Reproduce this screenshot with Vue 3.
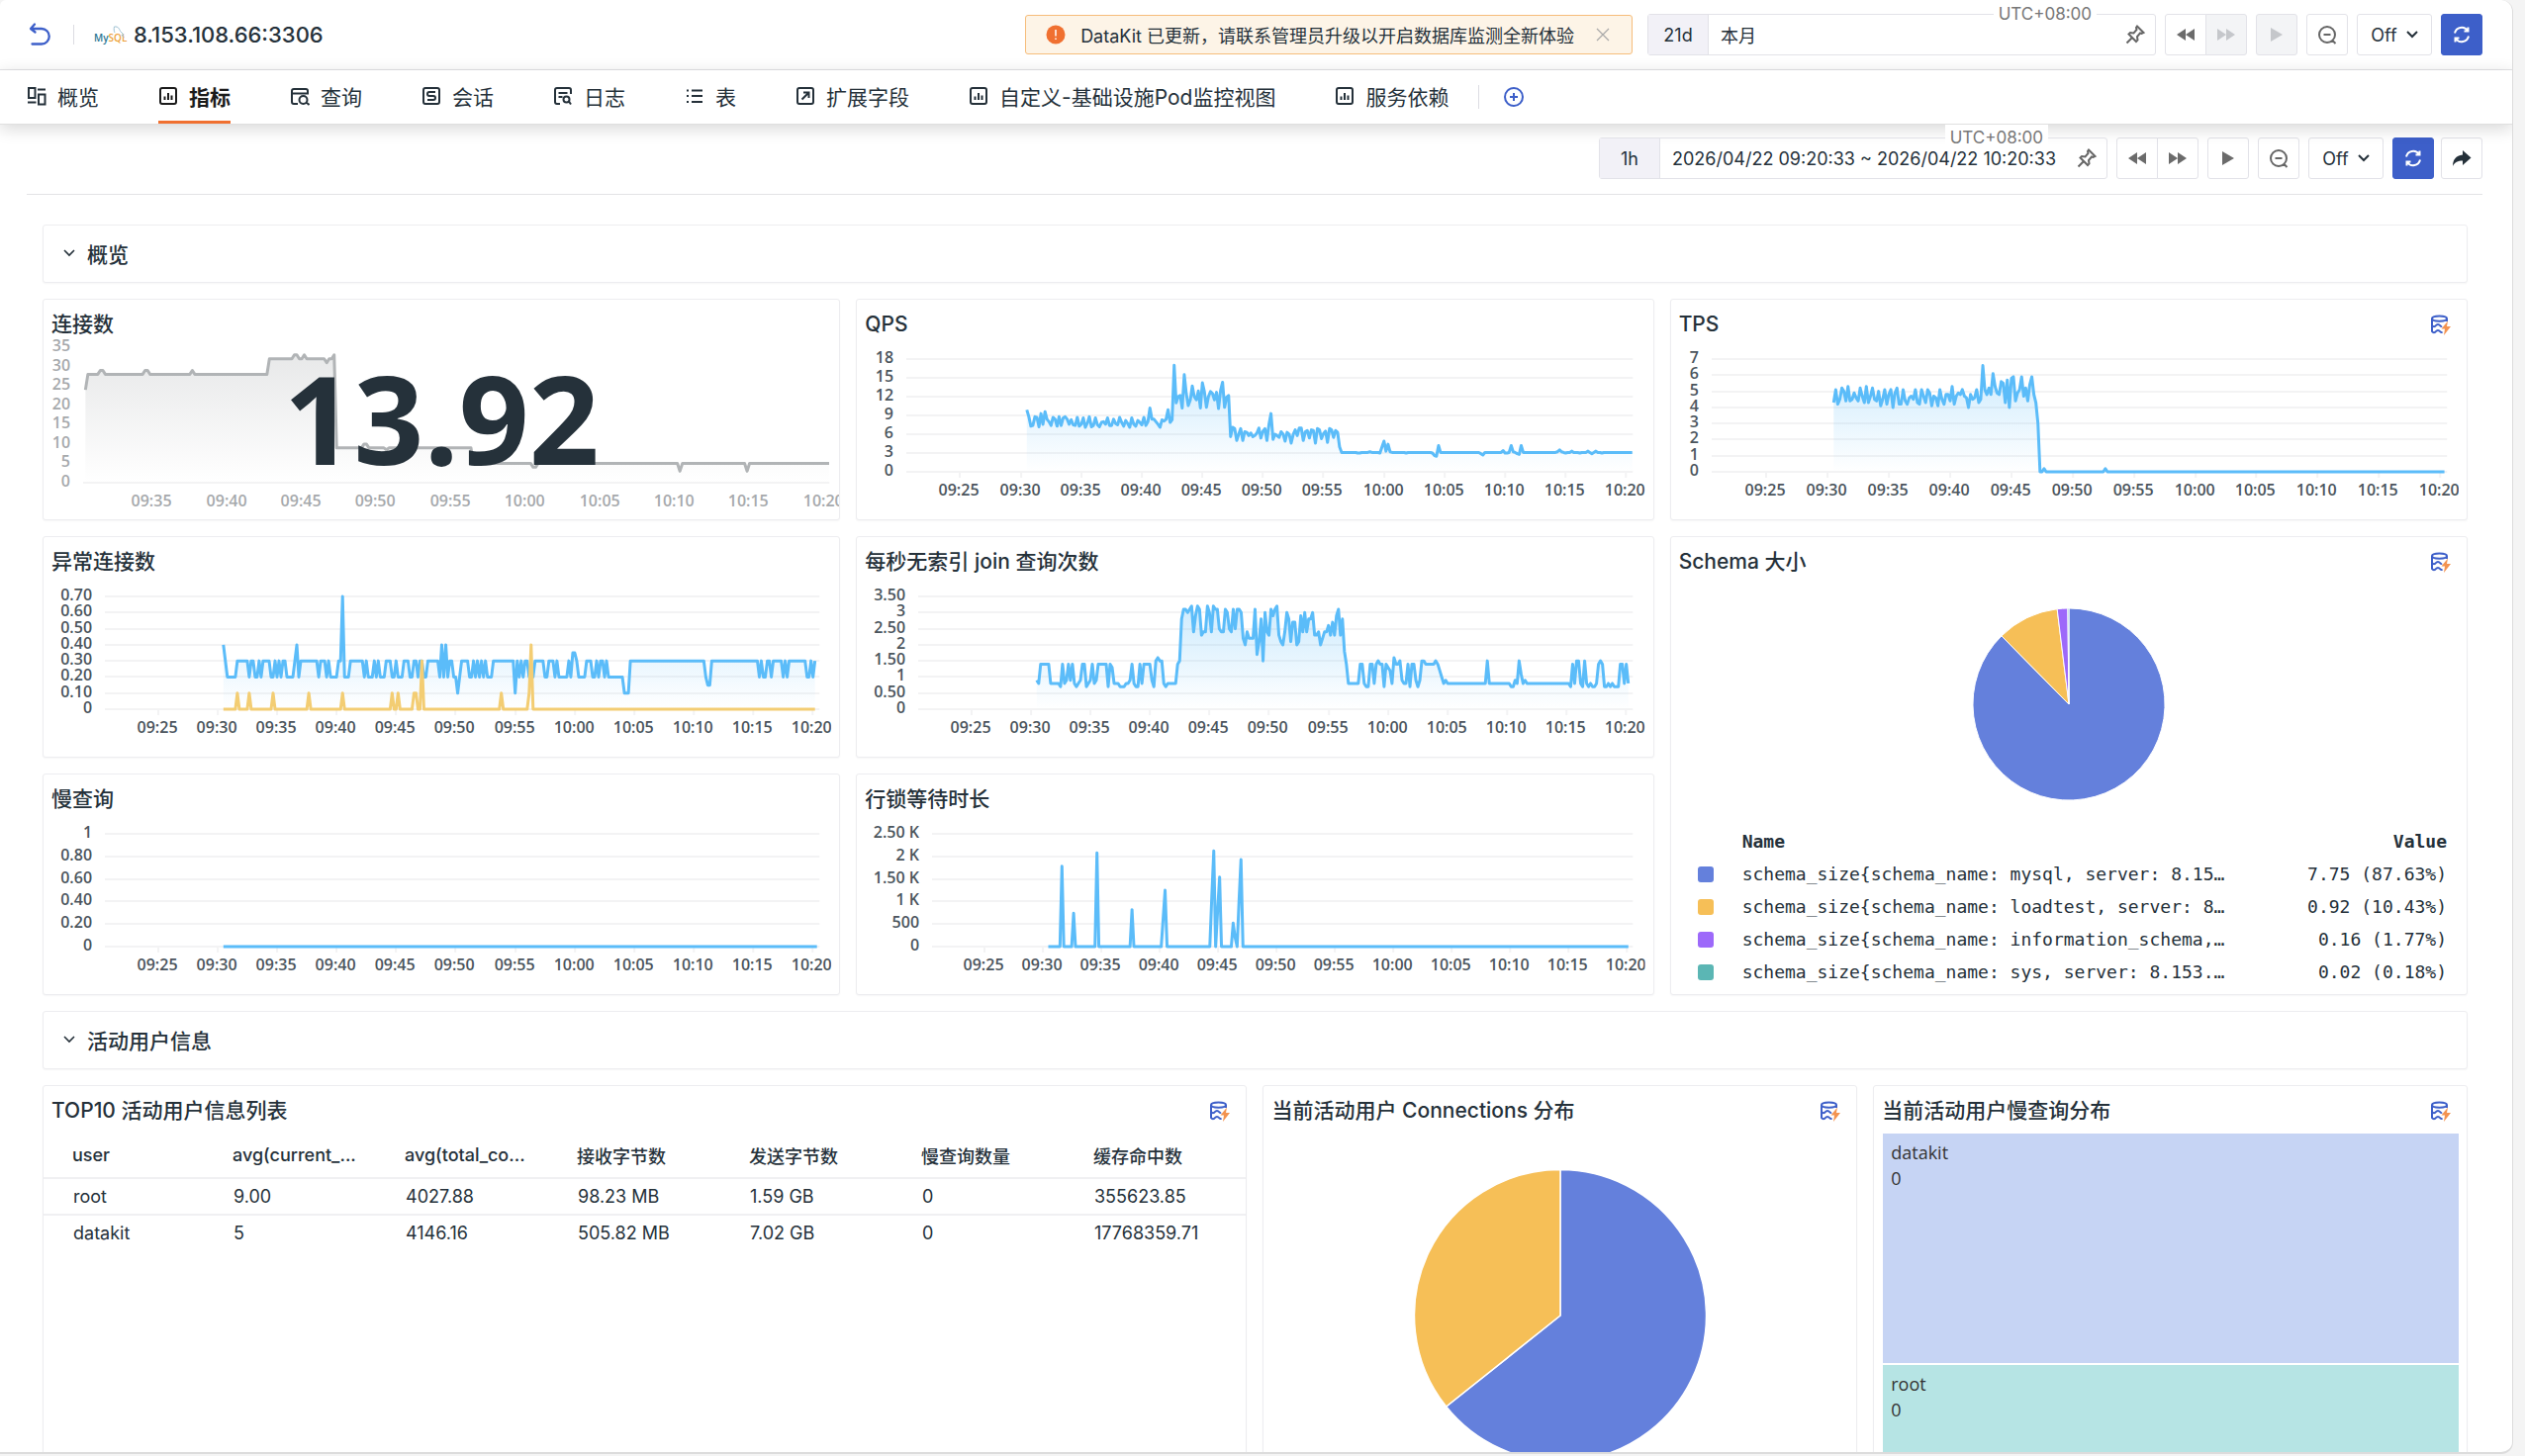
<template>
  <div class="panel">
    <header class="topbar">
      <div class="title-group">
        <button class="icon-btn back" aria-label="返回">
          <svg width="24" height="26" viewBox="0 0 24 26" fill="none" stroke="#3d5fc9" stroke-width="2.300" stroke-linecap="round" stroke-linejoin="round">
            <path d="M7 2.500 3 7l4.500 3.500M3.500 7H14a7.700 7.700 0 0 1 0 15.500H4.500" />
          </svg>
        </button>
        <span class="divider"></span>
        <svg class="mysql" width="34" height="22" viewBox="0 0 34 22" role="img" aria-label="MySQL">
          <text x="0" y="18" font-size="10"><tspan fill="#2c7694">My</tspan><tspan fill="#eda23c">SQL</tspan></text>
          <path d="M21 9c-1-2-1-4-.5-6 4-.5 5 2 6 4.500l3.500 3.500-2 .5 2.500 2.500" fill="none" stroke="#9cc0d2" />
        </svg>
        <h1>8.153.108.66:3306</h1>
      </div>
      <div class="alert">
        <svg width="20" height="20" viewBox="0 0 20 20">
          <circle cx="10" cy="10" r="9.500" fill="#f07030" />
          <path d="M10 5v6.500M10 13.500v1.500" stroke="#fff" stroke-width="1.500" />
        </svg>
        <span class="alert-text">DataKit 已更新，请联系管理员升级以开启数据库监测全新体验</span>
        <button class="icon-btn" aria-label="关闭">
          <svg width="14" height="14" viewBox="0 0 14 14" stroke="#a9a9a9" stroke-width="1.200"><path d="m1 1 12 12M13 1 1 13" /></svg>
        </button>
      </div>
      <div v-for="bar in bars.slice(0, 1)" :key="bar.range" class="time-controls">
        <div class="picker wide">
          <span class="utc">UTC+08:00</span>
          <span class="span-tag">{{ bar.span }}</span>
          <input class="range" :value="bar.range" aria-label="时间范围" readonly />
          <button class="icon-btn pin" aria-label="固定"><svg width="22" height="22" viewBox="0 0 22 22"><path :d="icons.pin" /></svg></button>
        </div>
        <div class="btn-group">
          <button class="tool" aria-label="后退"><svg width="20" height="14" viewBox="0 0 20 14"><path :d="icons.rewind" /></svg></button>
          <button class="tool" aria-label="前进" disabled><svg width="20" height="14" viewBox="0 0 20 14"><path :d="icons.forward" /></svg></button>
        </div>
        <button class="tool" aria-label="播放" disabled><svg width="14" height="16" viewBox="0 0 14 16"><path :d="icons.play" /></svg></button>
        <button class="tool stroke" aria-label="缩小"><svg width="20" height="20" viewBox="0 0 20 20"><path :d="icons.zoom" /></svg></button>
        <button class="tool off">Off<svg width="12" height="8" viewBox="0 0 12 8"><path d="m1 1 5 5 5-5" /></svg></button>
        <button class="tool refresh" aria-label="刷新"><svg width="20" height="20" viewBox="0 0 20 20"><path :d="icons.refresh" /></svg></button>
      </div>
    </header>

    <nav class="tabs">
      <a v-for="(tab, i) in tabs" :key="tab.label" href="#" :class="['tab', { active: i === 1 }]">
        <svg width="20" height="20" viewBox="0 0 20 20"><path :d="icons[tab.icon]" /></svg>
        <span>{{ tab.label }}</span>
      </a>
      <span class="divider tab-divider"></span>
      <button class="icon-btn" aria-label="新增">
        <svg width="22" height="22" viewBox="0 0 22 22" fill="none" stroke="#3d5fc9" stroke-width="2"><circle cx="11" cy="11" r="9" /><path d="M11 7v8M7 11h8" /></svg>
      </button>
    </nav>

    <main>
      <div class="subbar">
        <div v-for="bar in bars.slice(1)" :key="bar.range" class="time-controls">
          <div class="picker">
            <span class="utc">UTC+08:00</span>
            <span class="span-tag">{{ bar.span }}</span>
            <input class="range" :value="bar.range" aria-label="时间范围" readonly />
            <button class="icon-btn pin" aria-label="固定"><svg width="22" height="22" viewBox="0 0 22 22"><path :d="icons.pin" /></svg></button>
          </div>
          <div class="btn-group">
            <button class="tool" aria-label="后退"><svg width="20" height="14" viewBox="0 0 20 14"><path :d="icons.rewind" /></svg></button>
            <button class="tool" aria-label="前进"><svg width="20" height="14" viewBox="0 0 20 14"><path :d="icons.forward" /></svg></button>
          </div>
          <button class="tool" aria-label="播放"><svg width="14" height="16" viewBox="0 0 14 16"><path :d="icons.play" /></svg></button>
          <button class="tool stroke" aria-label="缩小"><svg width="20" height="20" viewBox="0 0 20 20"><path :d="icons.zoom" /></svg></button>
          <button class="tool off">Off<svg width="12" height="8" viewBox="0 0 12 8"><path d="m1 1 5 5 5-5" /></svg></button>
          <button class="tool refresh" aria-label="刷新"><svg width="20" height="20" viewBox="0 0 20 20"><path :d="icons.refresh" /></svg></button>
        </div>
        <button class="tool share" aria-label="分享"><svg width="20" height="18" viewBox="0 0 20 18"><path :d="icons.share" /></svg></button>
      </div>

      <div class="board">
        <button class="section">
          <svg width="12" height="8" viewBox="0 0 12 8"><path d="m1 1 5 5 5-5" /></svg>概览
        </button>

        <section v-for="chart in charts" :key="chart.title" class="card" :class="{ 'with-number': chart.number }">
          <div class="card-head">
            <h2>{{ chart.title }}</h2>
            <svg v-if="chart.badge" class="badge" width="22" height="22" viewBox="0 0 22 22">
              <path :d="icons.cylinder" /><path class="bolt" :d="icons.bolt" />
            </svg>
          </div>
          <svg class="plot" viewBox="0 0 804 184">
            <defs>
              <linearGradient :id="'fade-' + chart.id" x1="0" y1="0" x2="0" y2="1">
                <stop offset="0" :stop-color="chart.color" stop-opacity="0.3" />
                <stop offset="1" :stop-color="chart.color" stop-opacity="0" />
              </linearGradient>
            </defs>
            <g v-for="row in chart.rows" :key="row.label">
              <path v-if="row.line" class="grid" :d="`M${chart.left} ${row.y}H${chart.right}`" />
              <text class="axis" :x="chart.left - 13" :y="row.y + 4" text-anchor="end">{{ row.label }}</text>
            </g>
            <g v-for="tick in chart.ticks" :key="tick.label">
              <path v-if="!chart.number" class="grid" :d="`M${tick.x} ${chart.bottom}v6`" />
              <text class="axis" :x="tick.x - 1" :y="chart.bottom + 24" text-anchor="middle">{{ tick.label }}</text>
            </g>
            <g v-for="line in chart.lines" :key="line.color">
              <path v-if="line.area" :d="line.area" :fill="`url(#fade-${chart.id})`" />
              <path class="line" :d="line.path" :stroke="line.color" />
            </g>
          </svg>
          <div v-if="chart.number" class="number">{{ chart.number }}</div>
        </section>

        <section class="card schema">
          <div class="card-head">
            <h2>Schema 大小</h2>
            <svg class="badge" width="22" height="22" viewBox="0 0 22 22">
              <path :d="icons.cylinder" /><path class="bolt" :d="icons.bolt" />
            </svg>
          </div>
          <svg class="pie small" viewBox="-100 -100 200 200">
            <path v-for="slice in schemaPie" :key="slice.color" :d="slice.path" :fill="slice.color" />
          </svg>
          <table class="legend">
            <thead>
              <tr><th></th><th>Name</th><th>Value</th></tr>
            </thead>
            <tbody>
              <tr v-for="item in schemas" :key="item.name">
                <td><span class="swatch" :style="{ background: item.color }"></span></td>
                <td>{{ item.name }}</td>
                <td>{{ item.value }}</td>
              </tr>
            </tbody>
          </table>
        </section>

        <button class="section">
          <svg width="12" height="8" viewBox="0 0 12 8"><path d="m1 1 5 5 5-5" /></svg>活动用户信息
        </button>

        <section class="card tall half">
          <div class="card-head">
            <h2>TOP10 活动用户信息列表</h2>
            <svg class="badge" width="22" height="22" viewBox="0 0 22 22">
              <path :d="icons.cylinder" /><path class="bolt" :d="icons.bolt" />
            </svg>
          </div>
          <table class="users">
            <thead>
              <tr><th v-for="head in userHeads" :key="head">{{ head }}</th></tr>
            </thead>
            <tbody>
              <tr v-for="row in users" :key="row[0]">
                <td v-for="(cell, i) in row" :key="i">{{ cell }}</td>
              </tr>
            </tbody>
          </table>
        </section>

        <section class="card tall quarter">
          <div class="card-head">
            <h2>当前活动用户 Connections 分布</h2>
            <svg class="badge" width="22" height="22" viewBox="0 0 22 22">
              <path :d="icons.cylinder" /><path class="bolt" :d="icons.bolt" />
            </svg>
          </div>
          <svg class="pie large" viewBox="-100 -100 200 200">
            <path v-for="slice in userPie" :key="slice.color" :d="slice.path" :fill="slice.color" />
          </svg>
        </section>

        <section class="card tall quarter">
          <div class="card-head">
            <h2>当前活动用户慢查询分布</h2>
            <svg class="badge" width="22" height="22" viewBox="0 0 22 22">
              <path :d="icons.cylinder" /><path class="bolt" :d="icons.bolt" />
            </svg>
          </div>
          <div class="treemap">
            <div class="cell datakit"><span>datakit</span><span>0</span></div>
            <div class="cell root"><span>root</span><span>0</span></div>
          </div>
        </section>
      </div>
    </main>
  </div>
</template>

<script setup>
const bars = [
  { span: '21d', range: '本月' },
  { span: '1h', range: '2026/04/22 09:20:33 ~ 2026/04/22 10:20:33' }
]

const tabs = [
  { icon: 'overview', label: '概览' },
  { icon: 'chart', label: '指标' },
  { icon: 'query', label: '查询' },
  { icon: 'session', label: '会话' },
  { icon: 'log', label: '日志' },
  { icon: 'list', label: '表' },
  { icon: 'extend', label: '扩展字段' },
  { icon: 'chart', label: '自定义-基础设施Pod监控视图' },
  { icon: 'chart', label: '服务依赖' }
]

const icons = {
  overview: 'M2 2h6.500v10H2zM12 8.500h6.500v10H12zM11 3.500h8M1 16.500h8.500',
  chart: 'M4 2h12a2 2 0 0 1 2 2v12a2 2 0 0 1-2 2H4a2 2 0 0 1-2-2V4a2 2 0 0 1 2-2zM6.500 10.500V14M10 7v7M13.500 9.500V14',
  query: 'M8 18H4a2 2 0 0 1-2-2V5a2 2 0 0 1 2-2h12a2 2 0 0 1 2 2v2.500H2M13.500 10a4 4 0 1 1 0 8 4 4 0 0 1 0-8zM16.500 16.500l3 2.500',
  session: 'M4 2h12a2 2 0 0 1 2 2v12a2 2 0 0 1-2 2H4a2 2 0 0 1-2-2V4a2 2 0 0 1 2-2zM14 6H8a2 2 0 0 0 0 4h4a2 2 0 0 1 0 4H6',
  log: 'M7 18H4a2 2 0 0 1-2-2V4a2 2 0 0 1 2-2h12a2 2 0 0 1 2 2v4M5.500 7h9M5.500 11h4M13.500 10.500a3 3 0 1 1 0 6 3 3 0 0 1 0-6zM16 15.500l2 3',
  list: 'M7 4.500h11M7 10h11M7 16h11M2 4.500h2M2 10h2M2 16h2',
  extend: 'M4 2h12a2 2 0 0 1 2 2v12a2 2 0 0 1-2 2H4a2 2 0 0 1-2-2V4a2 2 0 0 1 2-2zM8 6.500h5.500V12M13.500 6.500 6.500 13.500',
  pin: 'M13 2.500 19.500 9l-2 1-1.500-.5-3 3.500.5 3.500-1.500 1.500-7.500-7.500L6 9l3.500.5L12.500 6 12 4zM8 14l-5.500 5.500',
  rewind: 'M10 1v12L1 7zM19 1v12l-9-6z',
  forward: 'M1 1v12l9-6zM10 1v12l9-6z',
  play: 'M1 1v14l12-7z',
  zoom: 'M10 2a8 8 0 1 1 0 16 8 8 0 0 1 0-16zM6.500 10h7M15.500 16l3 3',
  refresh: 'M3 8.500A7.200 7.200 0 0 1 16 6M17 11.500A7.200 7.200 0 0 1 4 14M16.500 2.500V6.500H12.500M3.500 17.500V13.500H7.500',
  share: 'M11 1v4.500C4 6 1 11 1 17c2-4 5-5.500 10-5.500V16l8.500-7.500z',
  cylinder: 'M3 5c0-3.500 15-3.500 15 0s-15 3.500-15 0zM3 5v13c1 1.500 3 1.500 4 0s3-1.500 4 0 2 1 2.500.5M18 5v3M3 12c1 1.500 3 1.500 4 0s3-1.500 4 0 1.500 1 2 .5',
  bolt: 'M19 7.500l-6.500 8h3.500l-1 6.500 7-9h-4z'
}

// "0.3x6" stands for six samples of 0.3, one sample every 10 seconds
function parse(text) {
  return text.trim().split(/\s+/).flatMap(part => {
    const [value, count] = part.split('x')
    return Array(Number(count || 1)).fill(Number(value))
  })
}

const BLUE = '#5bbcf9'
const YELLOW = '#f3cd73'

const connections = parse(`24 28x5 29x2 28x16 29x2 28x17 29 28x30 32x10 33x2 32x2 33 32x8 31 32x2 33
  9x11 10x2 9x7 8.5 9x34 5x24 4x2 5x57 3 5x26 3 5x34`)

const qps = parse(`9.9 8.8 7.3 7.4 8.8 8.7 7.2 9.3 7.6 9.6 8.4 8 7.4 8.7 8.4 7.3 8.8 7.4 8.6 8.8 8.4 7.6 8.3
  7.5 7.4 8.7 7.3 7.6 8.6 7.1 7.8 8.8 7.2 7.4 8.6 7.5 7.2 7.9 8 7.6 8.6 7.4 7.4 8.4 7.7 7.5 8.7 7.9 7.3 8.2
  7.7 7.1 8.6 7.6 7.3 8.2 7.9 7.5 8.7 7.4 8 10.2 8.4 8.4 8 7.6 7.1 8.3 8.1 8.4 9.9 7.9 8.3 17 11 12 12.2
  10.2 15.5 12.5 10.6 11.5 13.7 12 11.5 12.9 10.2 14.2 12.8 10.3 12 12.8 12.5 11.5 12.7 10.1 13 14.3 10.3
  11.9 12.2 5.6 7.1 6.9 5 6 6.9 5 6.4 6.3 5.8 6.2 5.6 5.8 6.2 7 5.4 6.5 6.9 5 7.6 9.3 5.2 6 5.8 5.5 6.4 6
  4.9 6.3 6 4.6 6 6.7 5.8 7 7 5 6.4 6.6 5.4 6.7 6.6 4.6 6.9 6.7 5.3 6.1 6.5 4.7 6.9 6.7 5.5 6.6 6.3 4
  3.1x8 3 3 3.1x4 3.2 3.1x4 3 4 4.9 3.3 4.4 3.2 3.1x7 3 3.1x12 3 2.6 2.5 4.2 3.1x20 2.9 2.7 3.1x9 3.4 3 3
  3.1 4.2 3.2 3.1 2.9 2.8 4.2 3.1x17 3.2 3.5 3.2 3.1 3 3.1x2 3.3 3.1x3 3 3.1x3 3.3 3.1 2.9 3.1 3.3 3.1x2 3
  3.1x16`)

const tps = parse(`4.3 5.1 4.2 4.5 5.2 5 4.4 5.3 4.4 4.5 4.9 4.6 4.4 5.2 4.7 4.3 5.3 4.3 4.7 5.2 4.5 4.4 5 4.1
  4.5 5.1 4.2 4.8 5.1 4 4.9 5.2 4.2 4.2 5.1 4.4 4.2 4.6 4.7 4.5 5.1 4.3 4.2 5.1 4.7 4.3 5.1 4.9 4.1 4.7 4.6
  4.1 5.1 4.5 4.2 4.8 4.8 4.4 5.3 4.2 4.7 4.9 4.8 5.1 4.7 4.6 4 4.8 4.5 4.6 5.1 4.3 4.5 6.6 5.1 4.8 5.2 4.8
  6.1 5.3 4.9 4.8 5.6 5.5 4.3 5.7 4 5.8 5.9 4.4 4.9 5.1 5.9 4.7 5.2 4.4 5.4 5.9 4.8 4.3 3 0 0 0.2 0x29 0.2
  0x166`)

const aborted = parse(`0.4 0.3 0.2x5 0.3x6 0.2 0.3x2 0.2x2 0.3 0.2 0.3x4 0.2x2 0.3 0.2 0.3 0.2 0.3x2 0.2x4 0.3
  0.4 0.2 0.3x9 0.2 0.3x3 0.2 0.3 0.2x4 0.3x2 0.7 0.2x3 0.3x7 0.2 0.3 0.2x3 0.3 0.2 0.3 0.2x3 0.3x3 0.2x2
  0.3 0.2x3 0.3x3 0.2x2 0.3x2 0.2 0.3x2 0.2x2 0.3x6 0.2 0.4 0.2 0.4 0.2 0.3x2 0.2x2 0.1 0.2 0.3x4 0.2x2 0.3
  0.2 0.3 0.2 0.3 0.2 0.3 0.2x3 0.3x11 0.1 0.3 0.2 0.3 0.2 0.3x2 0.2x3 0.3x5 0.2x2 0.3x3 0.2 0.3 0.2x5 0.3
  0.2 0.35x2 0.3 0.2x4 0.3x3 0.2x2 0.3 0.2 0.3x2 0.2 0.3 0.2x8 0.1x3 0.3x38 0.2 0.15x2 0.3x24 0.2 0.3 0.2x2
  0.3x2 0.2 0.3x5 0.2 0.3 0.2 0.3x9 0.2x2 0.3 0.2 0.3`)

const abortedClients = parse(`0x7 0.1 0x5 0.1 0x11 0.1 0x17 0.1 0x16 0.1 0x24 0.1 0x2 0.1 0x7 0.1x2 0x2 0.3
  0x39 0.1 0x13 0.1 0.4 0x143`)

const joins = parse(`0.9 0.8 1.4x5 0.8x5 0.7 1.4 0.8 0.9 1.4 0.9 1.4 0.8 0.7 0.8 0.9 1.4 1.4 0.7 0.8 0.9 1.4 0.8
  0.9 1.4x5 0.7 1.4 1.3 0.8x3 0.7x3 0.8 0.8 0.9 1.4 0.8 0.7 0.7 1.4 0.8 1.4x4 0.9 0.7 1.5 1.6 1.5 1.5 0.8
  0.7 0.8x5 1.4 1.5 2.8 3.1 3.1 3 3.1 3.2 2.4 2.9 3.2 3.1 2.3 2.4 2.4 3.2 3 2.4 3.2 3.1 3.1 2.5 2.4 2.4 3.1
  3 2.5 2.4 3.1 2.5 3.1 3.1 3 2.2 2 2.4 2.2x3 3.1 1.7 2.1 2.8 1.5 3 2.4 2.3 3.1 2.9 3.1 3.2 2.3 2.1 2 2.4 3
  2.8 2.1 2.7 2.7 2 2.1 2.9 2.4 3 2.4 2.8 2.8 3 2.3 2.3 2.4 2 2.2 2.4 2.4 2.6 2.3 2.7 2.3 2.9 3.1 2.3 2.8
  1.8 1.4 0.8x6 1.4 1.4 0.8 0.7 0.7 1.4 1.4 0.8 1.4 1.5 1.4 1.4 0.7 1.4 1.3 1.2 0.8 1.6 1.4 1.4 1.5 0.9 0.8
  0.8 1.4 0.7 1.4 1.4 0.9 0.7 0.9 1.5 1.5 1.4x5 1.5 1.4 1.2 1 0.8 0.9 0.8x20 1.5 0.8x11 0.7 0.7 0.9 0.8
  1.5 1.1 0.8 0.9 0.8x22 0.7 1.4 0.8 1.5 1.5 0.8 0.7 1.5 0.8 0.7 0.8 0.7 0.7 0.8 1.4 1.5 1.4 0.7 0.7 0.8
  0.7 0.8 0.7x3 1.4 1.4 0.8 1.4 0.8`)

const lockWait = parse(`0x7 1780 0x5 740 0x11 2080 0x17 820 0x15 600 1250 0x23 1100 2120 0 800 1540 0x6 520 200 0
  1000 1930 0x199`)

const fiveMinutes = Array.from({ length: 12 }, (_, i) => 25 + i * 5)

function clock(minute) {
  const hour = 9 + Math.floor(minute / 60)
  return `${String(hour).padStart(2, '0')}:${String(minute % 60).padStart(2, '0')}`
}

function buildChart(options) {
  const chart = { top: 22, bottom: 136, right: 784, from: 20.55, to: 80.55, color: BLUE, ...options }
  const perMinute = (chart.right - chart.left) / (chart.to - chart.from)
  const x = minute => chart.left + (minute - chart.from) * perMinute
  const y = value => chart.bottom - (value / chart.max) * (chart.bottom - chart.top)

  chart.rows = chart.labels.map((label, i) => ({
    label,
    y: Math.round(y((chart.max * i) / (chart.labels.length - 1))),
    line: !chart.number || i === 0
  }))
  chart.ticks = fiveMinutes
    .filter(minute => minute > chart.from + 2)
    .map(minute => ({ label: clock(minute), x: Math.round(x(minute)) }))
  chart.lines = chart.series.map((values, n) => {
    const points = values
      .map((value, i) => [x(30.5 + i / 6), y(value)])
      .filter(([px]) => px <= chart.right)
      .map(([px, py]) => `${px.toFixed(1)} ${py.toFixed(1)}`)
    const path = 'M' + points.join('L')
    const first = points[0].split(' ')[0]
    const last = points[points.length - 1].split(' ')[0]
    return {
      path,
      color: n ? YELLOW : chart.color,
      area: n ? '' : `${path}L${last} ${chart.bottom}L${first} ${chart.bottom}Z`
    }
  })
  return chart
}

const charts = [
  buildChart({
    id: 'connections', title: '连接数', number: '13.92', color: '#b1b4b6', series: [connections],
    left: 40, right: 794, top: 10, bottom: 147, from: 30.35, to: 80.35, max: 35,
    labels: ['0', '5', '10', '15', '20', '25', '30', '35']
  }),
  buildChart({
    id: 'qps', title: 'QPS', series: [qps], left: 50, max: 18,
    labels: ['0', '3', '6', '9', '12', '15', '18']
  }),
  buildChart({
    id: 'tps', title: 'TPS', series: [tps], left: 41, max: 7, badge: true,
    labels: ['0', '1', '2', '3', '4', '5', '6', '7']
  }),
  buildChart({
    id: 'aborted', title: '异常连接数', series: [aborted, abortedClients], left: 62, max: 0.7,
    labels: ['0', '0.10', '0.20', '0.30', '0.40', '0.50', '0.60', '0.70']
  }),
  buildChart({
    id: 'joins', title: '每秒无索引 join 查询次数', series: [joins], left: 62, max: 3.5,
    labels: ['0', '0.50', '1', '1.50', '2', '2.50', '3', '3.50']
  }),
  buildChart({
    id: 'slow', title: '慢查询', series: [parse('0x300')], left: 62, max: 1,
    labels: ['0', '0.20', '0.40', '0.60', '0.80', '1']
  }),
  buildChart({
    id: 'lock', title: '行锁等待时长', series: [lockWait], left: 76, max: 2500,
    labels: ['0', '500', '1 K', '1.50 K', '2 K', '2.50 K']
  })
]

const schemas = [
  { name: 'schema_size{schema_name: mysql, server: 8.15…', value: '7.75 (87.63%)', share: 87.63, color: '#6480dc' },
  { name: 'schema_size{schema_name: loadtest, server: 8…', value: '0.92 (10.43%)', share: 10.43, color: '#f6bf57' },
  { name: 'schema_size{schema_name: information_schema,…', value: '0.16 (1.77%)', share: 1.77, color: '#9d69fa' },
  { name: 'schema_size{schema_name: sys, server: 8.153.…', value: '0.02 (0.18%)', share: 0.18, color: '#5bb6b4' }
]

function buildPie(slices) {
  const total = slices.reduce((sum, slice) => sum + slice.share, 0)
  let angle = 0
  return slices.map(slice => {
    const start = angle
    angle += (slice.share / total) * Math.PI * 2
    const large = angle - start > Math.PI ? 1 : 0
    const at = a => `${(Math.sin(a) * 99).toFixed(2)} ${(-Math.cos(a) * 99).toFixed(2)}`
    return { color: slice.color, path: `M0 0L${at(start)}A99 99 0 ${large} 1 ${at(angle)}Z` }
  })
}

const schemaPie = buildPie(schemas)
const userPie = buildPie([
  { share: 9, color: '#6480dc' },
  { share: 5, color: '#f6bf57' }
])

const userHeads = ['user', 'avg(current_...', 'avg(total_co...', '接收字节数', '发送字节数', '慢查询数量', '缓存命中数']
const users = [
  ['root', '9.00', '4027.88', '98.23 MB', '1.59 GB', '0', '355623.85'],
  ['datakit', '5', '4146.16', '505.82 MB', '7.02 GB', '0', '17768359.71']
]
</script>

<style>
body {
  background: #f4f4f4;
}
</style>

<style scoped>
.panel {
  box-sizing: border-box;
  height: calc(100vh - 2px);
  margin-right: 12px;
  overflow: hidden;
  background: #fff;
  border-right: 1px solid #dcdcdc;
  border-bottom: 2px solid #dcdcdc;
  border-radius: 6px 12px 12px 0;
  color: #25313a;
  font-family: Inter, "Noto Sans CJK SC", sans-serif;
  font-size: 18px;
}

button,
input {
  font: inherit;
  color: inherit;
}

svg {
  display: block;
  flex: none;
}

h1,
h2 {
  margin: 0;
  font-size: 21px;
  font-weight: 500;
}

h1 {
  font-size: 22px;
}

.icon-btn {
  display: flex;
  padding: 0;
  border: none;
  background: none;
  cursor: pointer;
}

.topbar {
  display: flex;
  align-items: center;
  height: 70px;
  padding: 0 30px 0 28px;
  border-bottom: 1px solid #e3e3e6;
}

.title-group {
  display: flex;
  align-items: center;
  margin-right: auto;
}

.divider {
  width: 1px;
  height: 20px;
  margin: 0 20px 0 22px;
  background: #dcdce2;
}

.mysql {
  margin-right: 6px;
  font-family: "Open Sans", sans-serif;
  font-weight: 600;
}

.alert {
  display: flex;
  align-items: center;
  box-sizing: border-box;
  height: 40px;
  margin-right: 15px;
  padding: 0 22px 0 20px;
  background: #fdf4e7;
  border: 1px solid #f6bd7b;
  border-radius: 3px;
}

.alert-text {
  margin: 0 22px 0 15px;
}

.time-controls {
  display: flex;
  align-items: center;
  gap: 9px;
}

.picker {
  position: relative;
  display: flex;
  align-items: center;
  box-sizing: border-box;
  width: 514px;
  height: 42px;
  border: 1px solid #e2e2e8;
  border-radius: 3px;
}

.span-tag {
  display: flex;
  align-items: center;
  justify-content: center;
  align-self: stretch;
  width: 60px;
  background: #f2f1f7;
  border-right: 1px solid #e2e2e8;
}

.utc {
  position: absolute;
  top: -14px;
  right: 59px;
  padding: 0 5px;
  background: #fff;
  color: #777;
  font-size: 17px;
  line-height: 26px;
}

.range {
  flex: 1;
  min-width: 0;
  padding: 0 0 0 12px;
  border: none;
  outline: none;
  background: none;
}

.pin {
  margin-right: 9px;
}

.pin svg,
.tool.stroke svg,
.refresh svg,
.off svg,
.section svg {
  fill: none;
  stroke: #666;
  stroke-width: 2;
}

.btn-group {
  display: flex;
}

.btn-group .tool:first-child {
  border-radius: 3px 0 0 3px;
}

.btn-group .tool:last-child {
  margin-left: -1px;
  border-radius: 0 3px 3px 0;
}

.tool {
  display: flex;
  align-items: center;
  justify-content: center;
  box-sizing: border-box;
  width: 42px;
  height: 42px;
  padding: 0;
  background: #fff;
  border: 1px solid #e2e2e8;
  border-radius: 3px;
  fill: #6b6b6b;
  cursor: pointer;
}

.tool:disabled {
  background: #f3f4f6;
  fill: #c5c7cb;
}

.tool.off {
  gap: 9px;
  width: 76px;
}

.off svg,
.section svg {
  stroke: #25313a;
}

.tool.refresh {
  background: #3d5fc9;
  border-color: #3d5fc9;
}

.refresh svg {
  stroke: #fff;
}

.tool.share {
  fill: #25313a;
}

.tabs {
  position: relative;
  display: flex;
  align-items: center;
  gap: 60px;
  height: 54px;
  padding-left: 27px;
  border-bottom: 1px solid #e0e0e0;
  box-shadow: 0 4px 16px rgba(0, 0, 0, 0.16);
  font-size: 21px;
}

.tab {
  display: flex;
  align-items: center;
  gap: 11px;
  box-sizing: border-box;
  height: 54px;
  border-bottom: 3px solid transparent;
  color: inherit;
  text-decoration: none;
}

.tab svg {
  fill: none;
  stroke: currentColor;
  stroke-width: 2;
}

.tab.active {
  border-bottom-color: #f07030;
  font-weight: 600;
  color: #1b1b1b;
}

.tab-divider {
  height: 24px;
  margin: 0 -36px 0 -30px;
}

.subbar {
  display: flex;
  justify-content: flex-end;
  gap: 7px;
  margin: 0 30px 0 27px;
  padding: 13px 0 15px;
  border-bottom: 1px solid #e3e3e6;
}

.board {
  display: grid;
  grid-template-columns: repeat(24, minmax(0, 1fr));
  gap: 16px;
  align-items: start;
  padding: 30px 45px 16px 43px;
}

.section,
.card {
  box-sizing: border-box;
  background: #fff;
  border: 1px solid #ededf0;
  border-radius: 3px;
  box-shadow: 0 1px 2px rgba(0, 0, 0, 0.04);
}

.section {
  display: flex;
  align-items: center;
  grid-column: span 24;
  gap: 12px;
  height: 59px;
  padding: 0 20px 2px;
  font-size: 21px;
  font-weight: 500;
  cursor: pointer;
}

.section svg {
  stroke-width: 1.6;
}

.card {
  grid-column: span 8;
  position: relative;
  min-height: 224px;
  overflow: hidden;
}

.card-head {
  display: flex;
  align-items: center;
  justify-content: space-between;
  height: 26px;
  padding: 12px 16px 0 8px;
}

.card-head h2 {
  line-height: 26px;
}

.badge {
  fill: none;
  stroke: #3d5fc9;
  stroke-width: 2;
}

.badge .bolt {
  fill: #f39350;
  stroke: none;
}

.plot {
  width: 100%;
  clip-path: inset(0 8px 0 0);
}

.with-number .plot {
  clip-path: none;
}

.grid {
  stroke: #f3f3f4;
  stroke-width: 2;
}

.axis {
  fill: #4b555d;
  font-family: "Open Sans", "Noto Sans", sans-serif;
  font-size: 16px;
  font-weight: 600;
}

.with-number .axis {
  fill: #a6a9ac;
}

.line {
  fill: none;
  stroke-width: 3;
  stroke-linejoin: round;
}

.number {
  position: absolute;
  inset: 16px 0 0;
  display: flex;
  align-items: center;
  justify-content: center;
  font-family: "Open Sans", "Noto Sans", sans-serif;
  font-size: 124px;
  font-weight: 700;
  line-height: 1;
}

.schema {
  grid-column: 17 / span 8;
  grid-row: 3 / span 2;
  height: 464px;
}

.pie {
  margin: 0 auto;
  stroke: #fff;
  stroke-width: 1;
}

.pie.small {
  width: 196px;
  margin-top: 33px;
}

.pie.large {
  width: 298px;
  margin-top: 45px;
}

.legend {
  width: calc(100% - 47px);
  margin: 24px 20px 0 27px;
  border-collapse: collapse;
  font-family: "DejaVu Sans Mono", "Liberation Mono", monospace;
  font-size: 18px;
}

.legend th,
.legend td {
  height: 33px;
  padding: 0;
  text-align: left;
}

.legend th:first-child {
  width: 45px;
}

.legend th:last-child,
.legend td:last-child {
  text-align: right;
}

.swatch {
  display: block;
  width: 16px;
  height: 16px;
  border-radius: 3px;
}

.half {
  grid-column: span 12;
}

.quarter {
  grid-column: span 6;
}

.tall {
  height: 464px;
}

.users {
  width: 100%;
  margin-top: 9px;
  border-collapse: collapse;
  table-layout: fixed;
}

.users th {
  width: 174px;
  height: 46px;
  padding: 0 0 0 29px;
  box-sizing: border-box;
  font-weight: 500;
  text-align: left;
  white-space: nowrap;
}

.users th:first-child {
  width: 162px;
}

.users th:last-child {
  width: auto;
}

.users td {
  height: 35px;
  padding: 0 0 0 30px;
}

.users tr {
  border-bottom: 2px solid #f0f0f2;
}

.users tbody tr:last-child {
  border-bottom: none;
}

.treemap {
  display: flex;
  flex-direction: column;
  gap: 2px;
  margin: 10px 8px 0 9px;
  font-family: "Open Sans", "Noto Sans", sans-serif;
}

.cell {
  display: flex;
  flex-direction: column;
  box-sizing: border-box;
  height: 232px;
  padding: 6px 8px;
  line-height: 26px;
  color: #333;
}

.datakit {
  background: #c6d4f4;
}

.root {
  background: #b6e4e4;
}
</style>
